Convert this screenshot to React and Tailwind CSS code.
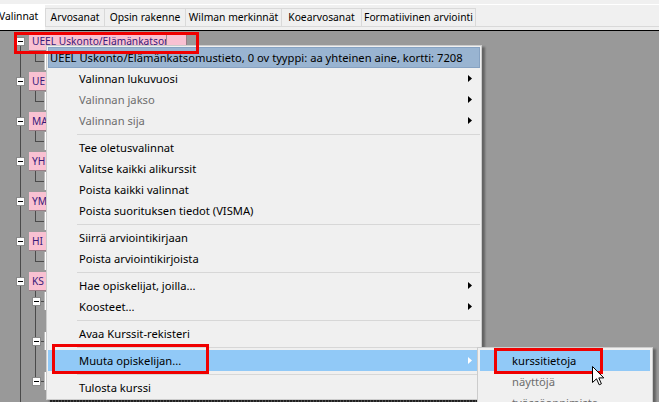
import React from "react";

const Arrow = ({ white }) => (
  <svg width="4" height="7" viewBox="0 0 4 7" className="block">
    <path d="M0 0 L4 3.5 L0 7 Z" fill={white ? "#ffffff" : "#000000"} />
  </svg>
);

const Minus = ({ className = "" }) => (
  <div className={"w-[9px] h-[9px] bg-white border border-[#8a8a8a] flex items-center justify-center shrink-0 " + className}>
    <div className="w-[5px] h-px bg-black" />
  </div>
);

function Tabs() {
  const tabs = [
    ["Arvosanat", "w-[59px]"],
    ["Opsin rakenne", "w-[81px]"],
    ["Wilman merkinnät", "w-[96px]"],
    ["Koearvosanat", "w-[80px]"],
    ["Formatiivinen arviointi", "w-[115px] border-r"],
  ];
  return (
    <div className="h-[31px] bg-[#f0f0f0] border-b border-black flex flex-col text-[10.3px]">
      <div className="h-[4px]" />
      <div className="h-px bg-white" />
      <div className="flex h-[22px] border-b border-[#d9d9d9] items-start">
        <div className="w-[46px] h-[25px] bg-white pt-[3px] leading-[16px] text-black -ml-[1px] pl-0 shrink-0">
          Valinnat
        </div>
        {tabs.map(([t, w]) => (
          <div
            key={t}
            className={
              "mt-[3px] h-[18px] border-t border-l border-[#d9d9d9] bg-[#f0f0f0] text-center leading-[17px] text-black whitespace-nowrap shrink-0 " +
              w
            }
          >
            {t}
          </div>
        ))}
      </div>
    </div>
  );
}

function TopRow({ label, wide }) {
  return (
    <div className="h-[20px] flex items-center">
      <div className="w-[16px] shrink-0" />
      <Minus />
      <div className="w-[4px] shrink-0" />
      {wide ? (
        <div className="h-[19px] flex bg-[#f9c1d2] border-r border-b border-[#9a7d86]">
          <div className="w-[137px] pl-[3px] overflow-hidden whitespace-nowrap leading-[18px] text-[#3a1a7a]">
            UEEL Uskonto/Elämänkatsor
          </div>
          <div className="w-px bg-[#a08a90]" />
          <div className="w-[19px]" />
        </div>
      ) : (
        <div className="h-[19px] w-[120px] pl-[3px] bg-[#f9c1d2] border-r border-b border-[#9a7d86] leading-[18px] text-[#3a1a7a] whitespace-nowrap">
          {label}
        </div>
      )}
    </div>
  );
}

function ChildRow() {
  return (
    <div className="h-[20px] flex items-start">
      <div className="w-[35px] shrink-0" />
      <div className="w-[9px] h-[11px] border-l border-b border-[#4a4a4a] shrink-0" />
      <div className="mt-[1px] w-[60px] h-[18px] bg-white border-l border-[#bdbdbd]" />
    </div>
  );
}

function KsChild() {
  return (
    <div className="h-[20px] flex items-center">
      <div className="w-[32px] shrink-0" />
      <Minus />
      <div className="w-[3px] h-px bg-[#4a4a4a] shrink-0" />
      <div className="w-[60px] h-[18px] bg-white border-l border-[#bdbdbd]" />
    </div>
  );
}

function Tree() {
  return (
    <div className="flex flex-col text-[10.2px] bg-[linear-gradient(#4a4a4a,#4a4a4a)] bg-no-repeat bg-[length:1px_100%] bg-[position:20px_14px]">
      <TopRow wide />
      <ChildRow />
      <TopRow label="UE" />
      <ChildRow />
      <TopRow label="MA" />
      <ChildRow />
      <TopRow label="YH" />
      <ChildRow />
      <TopRow label="YM" />
      <ChildRow />
      <TopRow label="HI" />
      <ChildRow />
      <TopRow label="KS" />
      <div className="flex flex-col bg-[linear-gradient(#4a4a4a,#4a4a4a)] bg-no-repeat bg-[length:1px_90px] bg-[position:35px_0px]">
        <KsChild />
        <div className="h-[20px]" />
        <KsChild />
        <div className="h-[20px]" />
        <KsChild />
        <div className="h-[20px]" />
      </div>
    </div>
  );
}

function Item({ text, disabled, sub, active }) {
  return (
    <div
      className={
        "h-[21px] flex items-center justify-between pl-[31px] pr-[8px] whitespace-nowrap " +
        (active ? "bg-[#91c9f7] text-black" : disabled ? "text-[#6d6d6d]" : "text-black")
      }
    >
      <span className="leading-[21px]">{text}</span>
      {sub && <Arrow white={active} />}
    </div>
  );
}

const Sep = () => (
  <div className="h-[6px] flex items-center pl-[29px]">
    <div className="h-px w-full bg-[#d7d7d7]" />
  </div>
);

function Menu() {
  return (
    <div className="absolute left-[46px] top-[45px] w-[436px] bg-[#f0f0f0] border border-[#cccccc] p-px shadow-[3px_2px_2px_rgba(0,0,0,0.35)]">
      <div className="h-[21px] bg-[#99b4d1] border border-[#86a2c2] pl-px leading-[19px] text-black whitespace-nowrap overflow-hidden">
        UEEL Uskonto/Elämänkatsomustieto, 0 ov tyyppi: aa yhteinen aine, kortti: 7208
      </div>
      <Item text="Valinnan lukuvuosi" sub />
      <Item text="Valinnan jakso" sub disabled />
      <Item text="Valinnan sija" sub disabled />
      <Sep />
      <Item text="Tee oletusvalinnat" />
      <Item text="Valitse kaikki alikurssit" />
      <Item text="Poista kaikki valinnat" />
      <Item text="Poista suorituksen tiedot (VISMA)" />
      <Sep />
      <Item text="Siirrä arviointikirjaan" />
      <Item text="Poista arviointikirjoista" />
      <Sep />
      <Item text="Hae opiskelijat, joilla..." sub />
      <Item text="Koosteet..." sub />
      <Sep />
      <Item text="Avaa Kurssit-rekisteri" />
      <Sep />
      <Item text="Muuta opiskelijan..." sub active />
      <Sep />
      <Item text="Tulosta kurssi" />
    </div>
  );
}

function Submenu() {
  return (
    <div className="absolute left-[477px] top-[347px] w-[176px] h-[80px] bg-[#f0f0f0] border border-[#cccccc] p-[2px] shadow-[3px_2px_2px_rgba(0,0,0,0.35)]">
      <div className="h-[21px] bg-[#91c9f7] pl-[32px] leading-[21px] text-black">kurssitietoja</div>
      <div className="h-[21px] pl-[32px] leading-[21px] text-[#6d6d6d]">näyttöjä</div>
      <div className="h-[21px] pl-[32px] leading-[21px] text-[#6d6d6d]">työssäoppimista</div>
    </div>
  );
}

export default function App() {
  return (
    <div className="w-[659px] h-[402px] overflow-hidden relative bg-[#999999] font-['Segoe_UI','Noto_Sans',sans-serif] text-[11.2px]">
      <Tabs />
      <Tree />
      <div className="absolute left-[50px] top-[398px] w-[427px] h-[4px] bg-[repeating-linear-gradient(90deg,#2e2e2e_0px,#2e2e2e_2px,#6a6a6a_2px,#6a6a6a_3px)]" />
      <Menu />
      <Submenu />
      <div className="absolute left-[14px] top-[32px] w-[185px] h-[22px] border-[3px] border-[#f00000]" />
      <div className="absolute left-[52px] top-[344px] w-[157px] h-[30px] border-[3px] border-[#f00000]" />
      <div className="absolute left-[494px] top-[348px] w-[109px] h-[26px] border-[3px] border-[#f00000]" />
      <svg className="absolute left-[592px] top-[366px]" width="13" height="20" viewBox="0 0 13 20">
        <path d="M0.5 0.5 L0.5 16.5 L4.5 12.8 L7.2 18.8 L9.4 17.8 L6.8 11.9 L11.8 11.9 Z" fill="#ffffff" stroke="#000000" strokeWidth="1" strokeLinejoin="miter" />
      </svg>
    </div>
  );
}
